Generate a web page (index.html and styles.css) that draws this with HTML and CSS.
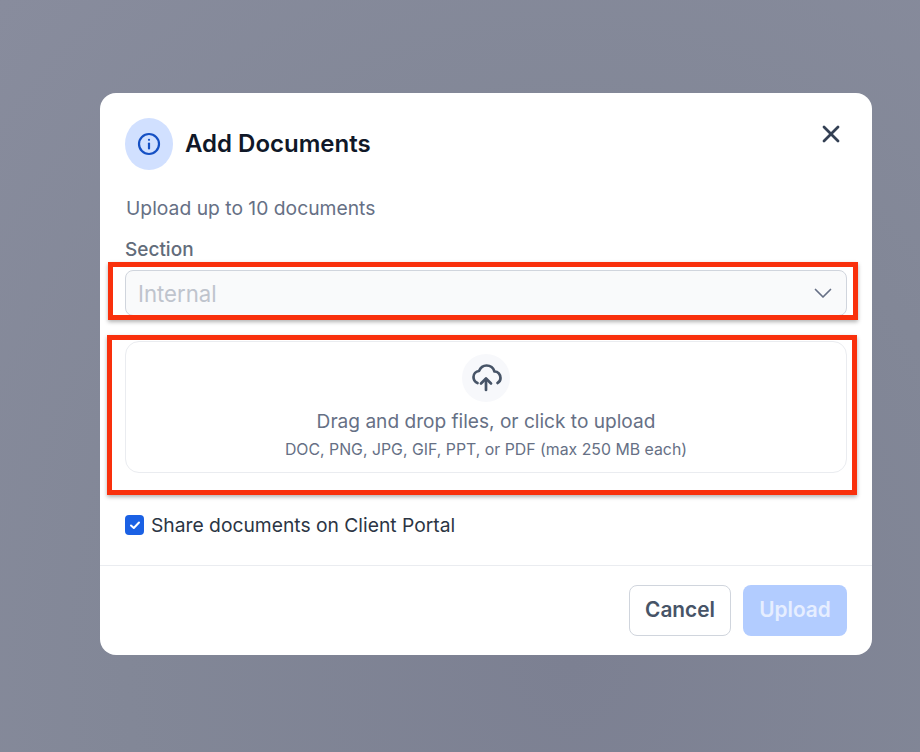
FILE: index.html
```html
<!DOCTYPE html>
<html lang="en">

<head>
  <meta charset="UTF-8">
  <meta name="viewport" content="width=device-width, initial-scale=1.0">
  <title>Add Documents</title>
  <link rel="stylesheet" href="styles.css">
</head>

<body>
  <div class="modal">
    <div class="modal-body">
      <div class="modal-header">
        <div class="info-icon">
          <svg width="24" height="24" viewBox="0 0 24 24" fill="none" stroke="#1550c4" stroke-width="2.2" stroke-linecap="round">
            <circle cx="12" cy="12" r="10"></circle>
            <path d="M12 16.5v-5"></path>
            <path d="M12 7.8h.01"></path>
          </svg>
        </div>
        <h2>Add Documents</h2>
        <button class="close-button" aria-label="Close">
          <svg width="18" height="18" viewBox="0 0 18 18" fill="none" stroke="#344054" stroke-width="2.8" stroke-linecap="round">
            <path d="M2 2l14 14"></path>
            <path d="M16 2L2 16"></path>
          </svg>
        </button>
      </div>
      <p class="hint">Upload up to 10 documents</p>
      <label class="field-label">Section</label>
      <div class="select-box">
        <span>Internal</span>
        <svg width="20" height="20" viewBox="0 0 20 20" fill="none" stroke="#667085" stroke-width="1.7" stroke-linecap="round" stroke-linejoin="round">
          <path d="M2.5 6.5l7.5 7.5 7.5-7.5"></path>
        </svg>
      </div>
      <div class="drop-zone">
        <div class="upload-icon">
          <svg width="32" height="32" viewBox="0 0 32 32" fill="none" stroke="#475467" stroke-width="2.7" stroke-linecap="round" stroke-linejoin="round">
            <path d="M7.5 21C5 20 3.5 18 3.5 15 3.5 11.7 6 9.3 9 9 10.5 5.5 13.5 3.5 16.5 3.5 20.5 3.5 23.5 6.3 24.5 9.5 28 9.5 30.5 12.5 30.5 16 30.5 18.2 29.5 20 27.5 21"></path>
            <path d="M16 28V17"></path>
            <path d="M11 21.5l5-5 5 5"></path>
          </svg>
        </div>
        <div class="drop-title">Drag and drop files, or click to upload</div>
        <div class="drop-sub">DOC, PNG, JPG, GIF, PPT, or PDF (max 250 MB each)</div>
      </div>
      <div class="share-row">
        <span class="checkbox">
          <svg width="14" height="14" viewBox="0 0 14 14" fill="none" stroke="#fff" stroke-width="2" stroke-linecap="round" stroke-linejoin="round">
            <path d="M3 7.5l2.8 2.5L11 4.5"></path>
          </svg>
        </span>
        <span>Share documents on Client Portal</span>
      </div>
    </div>
    <div class="modal-footer">
      <button class="btn btn-cancel">Cancel</button>
      <button class="btn btn-upload">Upload</button>
    </div>
  </div>

  <!-- red annotation boxes on top of the screenshot -->
  <div class="marker marker-select"></div>
  <div class="marker marker-drop"></div>
</body>

</html>
```

FILE: styles.css
```css
html,
body {
  height: 100%;
}

body {
  font-family: Inter, "Liberation Sans", sans-serif;
  margin: 0;
  padding: 93px 0 0 100px;
  box-sizing: border-box;
  background-color: #828797;
  background-image: radial-gradient(ellipse at 62% 88%, #7c8092 0, #828797 55%, #888c9d 100%);
  overflow: hidden;
}

.modal {
  width: 772px;
  height: 562px;
  background-color: #fff;
  border-radius: 16px;
  display: flex;
  flex-direction: column;
}

.modal-body {
  flex: 1;
  padding: 25px 25px 0;
}

.modal-header {
  display: flex;
  align-items: center;
  height: 52px;
}

.info-icon {
  width: 48px;
  height: 52px;
  border-radius: 50%;
  background-color: #d1e0ff;
  display: flex;
  align-items: center;
  justify-content: center;
}

.modal-header h2 {
  margin: 0 0 2px 12px;
  flex: 1;
  font-size: 24px;
  font-weight: 600;
  color: #101828;
}

.close-button {
  border: none;
  background: none;
  padding: 0;
  margin: -20px 7px 0 0;
  display: flex;
  cursor: pointer;
}

.hint {
  margin: 25px 0 0 1px;
  font-size: 19.3px;
  line-height: 26px;
  color: #667085;
}

.field-label {
  display: block;
  margin-top: 17px;
  font-size: 19px;
  line-height: 24px;
  font-weight: 500;
  color: #626c7a;
}

.select-box {
  box-sizing: border-box;
  height: 46px;
  margin-top: 8px;
  padding: 0 13px 0 12px;
  display: flex;
  align-items: center;
  justify-content: space-between;
  background-color: #f9fafb;
  border: 1px solid #d0d5dd;
  border-radius: 8px;
  font-size: 22.2px;
  color: #bfc4cd;
}

.drop-zone {
  box-sizing: border-box;
  height: 132px;
  margin-top: 25px;
  padding-top: 12px;
  border: 1px solid #eaecf0;
  border-radius: 14px;
  text-align: center;
}

.upload-icon {
  width: 48px;
  height: 48px;
  margin: 0 auto;
  border-radius: 50%;
  background-color: #f7f8fb;
  display: flex;
  align-items: center;
  justify-content: center;
}

.drop-title {
  margin-top: 6px;
  font-size: 19.1px;
  line-height: 26px;
  color: #667085;
}

.drop-sub {
  margin-top: 5px;
  font-size: 15.85px;
  line-height: 22px;
  color: #667085;
}

.share-row {
  margin-top: 40px;
  display: flex;
  align-items: center;
  gap: 7px;
  font-size: 19.25px;
  line-height: 24px;
  color: #2b3544;
}

.checkbox {
  width: 19px;
  height: 20px;
  border-radius: 4px;
  background-color: #1b61e4;
  display: flex;
  align-items: center;
  justify-content: center;
}

.modal-footer {
  height: 90px;
  box-sizing: border-box;
  border-top: 1px solid #eaecf0;
  padding: 19px 25px 0;
  display: flex;
  justify-content: flex-end;
  gap: 12px;
}

.btn {
  box-sizing: border-box;
  height: 51px;
  padding: 0 0 2px;
  border-radius: 8px;
  font-family: inherit;
  font-size: 20.8px;
  font-weight: 600;
  cursor: pointer;
}

.btn-cancel {
  width: 102px;
  background-color: #fff;
  border: 1px solid #d0d5dd;
  color: #475467;
}

.btn-upload {
  width: 104px;
  background-color: #b2ccff;
  border: none;
  color: #e6eeff;
}

.marker {
  position: absolute;
  box-sizing: border-box;
  border: 5px solid #f9300c;
  box-shadow: 0 2px 4px rgba(0, 0, 0, 0.3);
}

.marker-select {
  left: 108px;
  top: 262px;
  width: 750px;
  height: 58px;
}

.marker-drop {
  left: 107px;
  top: 335px;
  width: 750px;
  height: 160px;
}
```
